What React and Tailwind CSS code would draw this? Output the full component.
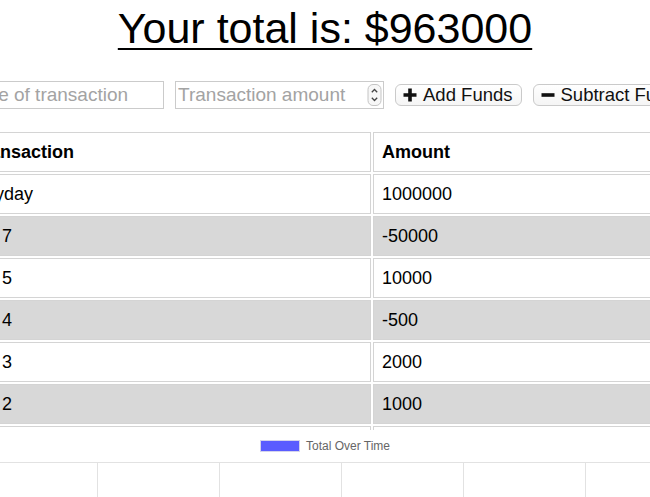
import React from "react";

const transactions = [
  { name: "Payday", value: 1000000 },
  { name: "Bill 7", value: -50000 },
  { name: "Bill 5", value: 10000 },
  { name: "Bill 4", value: -500 },
  { name: "Bill 3", value: 2000 },
  { name: "Bill 2", value: 1000 },
  { name: "Bill 1", value: 500 },
  { name: "Bill 0", value: 0 },
];

function PlusIcon() {
  return (
    <svg width="14" height="14" viewBox="0 0 14 14">
      <path d="M5.2 0.5h3.6v4.7h4.7v3.6H8.8v4.7H5.2V8.8H0.5V5.2h4.7z" fill="currentColor" />
    </svg>
  );
}

function MinusIcon() {
  return (
    <svg width="14" height="14" viewBox="0 0 14 14">
      <rect x="0.5" y="5.2" width="13" height="3.6" fill="currentColor" />
    </svg>
  );
}

function Spinner() {
  return (
    <svg width="15" height="22" viewBox="0 0 15 22">
      <rect x="1" y="0.5" width="13" height="21" rx="5" fill="#f7f7f7" stroke="#c4c4c4" />
      <path d="M4.8 8.2l2.7-2.7 2.7 2.7" fill="none" stroke="#444" strokeWidth="1.3" />
      <path d="M4.8 13.8l2.7 2.7 2.7-2.7" fill="none" stroke="#444" strokeWidth="1.3" />
    </svg>
  );
}

function Field({ placeholder, spinner }) {
  return (
    <div className="flex items-center w-[209px] h-[28px] shrink-0 border border-[#cbcbcb] bg-white pl-[2px] pr-[1px]">
      <input
        type="text"
        placeholder={placeholder}
        className="flex-1 min-w-0 bg-transparent outline-none text-[19px] leading-[22px] text-black placeholder:text-[#a3a3a3]"
      />
      {spinner && <Spinner />}
    </div>
  );
}

function FundButton({ icon, label }) {
  return (
    <button className="flex items-center gap-[6px] h-[22px] shrink-0 pl-[7px] pr-[8px] rounded-[6px] border border-[#cacaca] bg-gradient-to-b from-white to-[#f5f5f5] text-[18.5px] leading-[20px] text-[#111]">
      {icon}
      <span>{label}</span>
    </button>
  );
}

function ChartGrid() {
  const xs = [30, 152, 274, 396, 518, 640];
  return (
    <svg width="760" height="35" className="block shrink-0 mt-[10px]">
      <line x1="0" y1="0.5" x2="760" y2="0.5" stroke="#e2e2e2" />
      {xs.map((x) => (
        <line key={x} x1={x + 0.5} y1="0" x2={x + 0.5} y2="35" stroke="#e2e2e2" />
      ))}
    </svg>
  );
}

export default function App() {
  return (
    <div className="w-full h-[497px] overflow-hidden flex items-start justify-center bg-white font-['Liberation_Sans',Arial,sans-serif] text-black">
      <div className="w-[760px] shrink-0 flex flex-col items-center">
        <h1 className="shrink-0 pt-[4px] text-[43px] leading-[48px] font-normal underline decoration-[2px] underline-offset-[5px]">
          Your total is: $963000
        </h1>

        <form className="shrink-0 mt-[29px] flex items-center justify-center gap-[11px] h-[28px]">
          <Field placeholder="Name of transaction" />
          <Field placeholder="Transaction amount" spinner />
          <FundButton icon={<PlusIcon />} label="Add Funds" />
          <FundButton icon={<MinusIcon />} label="Subtract Funds" />
        </form>

        <div className="shrink-0 mt-[21px] max-h-[300px] h-[300px] overflow-hidden">
          <table className="w-[726px] table-fixed border-separate border-spacing-[2px] text-left text-[18px] leading-[22px]">
            <colgroup>
              <col className="w-[407px]" />
              <col />
            </colgroup>
            <thead>
              <tr>
                <th className="border border-[#d4d4d4] px-[8px] py-[8px] font-bold">Transaction</th>
                <th className="border border-[#d4d4d4] px-[8px] py-[8px] font-bold">Amount</th>
              </tr>
            </thead>
            <tbody>
              {transactions.map((t, i) => (
                <tr key={t.name} className={i % 2 === 1 ? "bg-[#d8d8d8]" : "bg-white"}>
                  <td className="border border-[#d4d4d4] px-[8px] py-[8px]">{t.name}</td>
                  <td className="border border-[#d4d4d4] px-[8px] py-[8px]">{t.value}</td>
                </tr>
              ))}
            </tbody>
          </table>
        </div>

        <div className="shrink-0 mt-[10px] flex items-center gap-[6px] h-[12px]">
          <span className="w-[40px] h-[12px] bg-[#5a5cff] border border-[#d4d4ec]" />
          <span className="text-[12px] leading-[12px] text-[#666]">Total Over Time</span>
        </div>

        <ChartGrid />
      </div>
    </div>
  );
}
